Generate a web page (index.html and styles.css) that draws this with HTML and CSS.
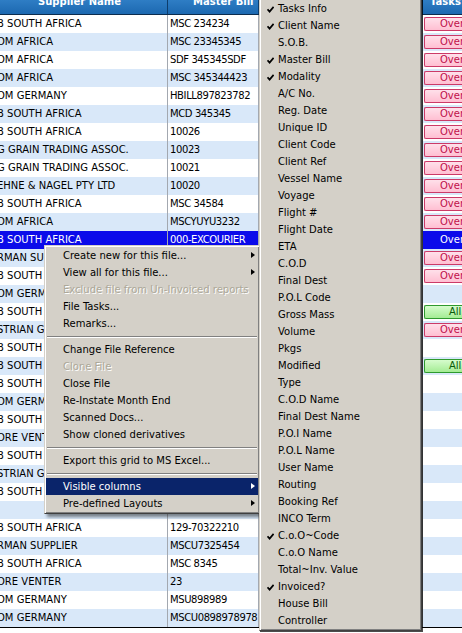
FILE: index.html
```html
<!DOCTYPE html>
<html>
<head>
<meta charset="utf-8">
<link rel="stylesheet" href="styles.css">
</head>
<body>
<div class="screen">
  <div class="grid">
    <div class="hdr">
      <div class="hc h-sup">Supplier Name</div>
      <div class="hc h-mb">Master Bill</div>
      <div class="hc h-x">Modality</div>
      <div class="hc h-t">Tasks Info</div>
    </div>
    <div class="row"><div class="c sup">B SOUTH AFRICA</div><div class="c mb">MSC 234234</div><div class="c x">Sea</div><div class="c t"><span class="bd over">Overdue</span></div></div>
    <div class="row alt"><div class="c sup">OM AFRICA</div><div class="c mb">MSC 23345345</div><div class="c x">Sea</div><div class="c t"><span class="bd over">Overdue</span></div></div>
    <div class="row"><div class="c sup">OM AFRICA</div><div class="c mb">SDF 345345SDF</div><div class="c x">Sea</div><div class="c t"><span class="bd over">Overdue</span></div></div>
    <div class="row alt"><div class="c sup">OM AFRICA</div><div class="c mb">MSC 345344423</div><div class="c x">Sea</div><div class="c t"><span class="bd over">Overdue</span></div></div>
    <div class="row"><div class="c sup">OM GERMANY</div><div class="c mb">HBILL897823782</div><div class="c x">Air</div><div class="c t"><span class="bd over">Overdue</span></div></div>
    <div class="row alt"><div class="c sup">B SOUTH AFRICA</div><div class="c mb">MCD 345345</div><div class="c x">Sea</div><div class="c t"><span class="bd over">Overdue</span></div></div>
    <div class="row"><div class="c sup">B SOUTH AFRICA</div><div class="c mb">10026</div><div class="c x">Sea</div><div class="c t"><span class="bd over">Overdue</span></div></div>
    <div class="row alt"><div class="c sup">G GRAIN TRADING ASSOC.</div><div class="c mb">10023</div><div class="c x">Sea</div><div class="c t"><span class="bd over">Overdue</span></div></div>
    <div class="row"><div class="c sup">G GRAIN TRADING ASSOC.</div><div class="c mb">10021</div><div class="c x">Sea</div><div class="c t"><span class="bd over">Overdue</span></div></div>
    <div class="row alt"><div class="c sup">EHNE &amp; NAGEL PTY LTD</div><div class="c mb">10020</div><div class="c x">Sea</div><div class="c t"><span class="bd over">Overdue</span></div></div>
    <div class="row"><div class="c sup">B SOUTH AFRICA</div><div class="c mb">MSC 34584</div><div class="c x">Sea</div><div class="c t"><span class="bd over">Overdue</span></div></div>
    <div class="row alt"><div class="c sup">OM AFRICA</div><div class="c mb">MSCYUYU3232</div><div class="c x">Sea</div><div class="c t"><span class="bd over">Overdue</span></div></div>
    <div class="row sel"><div class="c sup">B SOUTH AFRICA</div><div class="c mb">000-EXCOURIER</div><div class="c x">Courier</div><div class="c t"><span class="bd selb">Overdue</span></div></div>
    <div class="row alt"><div class="c sup">RMAN SUPPLIER</div><div class="c mb">MSCU7325454</div><div class="c x">Sea</div><div class="c t"><span class="bd over">Overdue</span></div></div>
    <div class="row"><div class="c sup">B SOUTH AFRICA</div><div class="c mb">MSC 8345</div><div class="c x">Sea</div><div class="c t"><span class="bd over">Overdue</span></div></div>
    <div class="row alt"><div class="c sup">OM GERMANY</div><div class="c mb">MSU898989</div><div class="c x">Sea</div><div class="c t"></div></div>
    <div class="row"><div class="c sup">B SOUTH AFRICA</div><div class="c mb">10019</div><div class="c x">Sea</div><div class="c t"><span class="bd all">All done</span></div></div>
    <div class="row alt"><div class="c sup">STRIAN GRAIN</div><div class="c mb">10018</div><div class="c x">Sea</div><div class="c t"><span class="bd over">Overdue</span></div></div>
    <div class="row"><div class="c sup">B SOUTH AFRICA</div><div class="c mb">10017</div><div class="c x">Sea</div><div class="c t"></div></div>
    <div class="row alt"><div class="c sup">B SOUTH AFRICA</div><div class="c mb">10016</div><div class="c x">Sea</div><div class="c t"><span class="bd all">All done</span></div></div>
    <div class="row"><div class="c sup">B SOUTH AFRICA</div><div class="c mb">10015</div><div class="c x">Sea</div><div class="c t"></div></div>
    <div class="row alt"><div class="c sup">OM GERMANY</div><div class="c mb">10014</div><div class="c x">Sea</div><div class="c t"></div></div>
    <div class="row"><div class="c sup">B SOUTH AFRICA</div><div class="c mb">10013</div><div class="c x">Sea</div><div class="c t"></div></div>
    <div class="row alt"><div class="c sup">ORE VENTER</div><div class="c mb">10012</div><div class="c x">Sea</div><div class="c t"></div></div>
    <div class="row"><div class="c sup">B SOUTH AFRICA</div><div class="c mb">10011</div><div class="c x">Sea</div><div class="c t"></div></div>
    <div class="row alt"><div class="c sup">STRIAN GRAIN</div><div class="c mb">10010</div><div class="c x">Sea</div><div class="c t"></div></div>
    <div class="row"><div class="c sup">B SOUTH AFRICA</div><div class="c mb">10009</div><div class="c x">Sea</div><div class="c t"></div></div>
    <div class="row alt"><div class="c sup"></div><div class="c mb">10008</div><div class="c x">Sea</div><div class="c t"></div></div>
    <div class="row"><div class="c sup">B SOUTH AFRICA</div><div class="c mb">129-70322210</div><div class="c x">Air</div><div class="c t"></div></div>
    <div class="row alt"><div class="c sup">RMAN SUPPLIER</div><div class="c mb">MSCU7325454</div><div class="c x">Sea</div><div class="c t"></div></div>
    <div class="row"><div class="c sup">B SOUTH AFRICA</div><div class="c mb">MSC 8345</div><div class="c x">Sea</div><div class="c t"></div></div>
    <div class="row alt"><div class="c sup">ORE VENTER</div><div class="c mb">23</div><div class="c x">Sea</div><div class="c t"></div></div>
    <div class="row"><div class="c sup">OM GERMANY</div><div class="c mb">MSU898989</div><div class="c x">Sea</div><div class="c t"></div></div>
    <div class="row alt"><div class="c sup">OM GERMANY</div><div class="c mb">MSCU0898978978</div><div class="c x">Sea</div><div class="c t"></div></div>
  </div>

  <div class="menu ctx">
    <div class="mi">Create new for this file...<span class="arr"></span></div>
    <div class="mi">View all for this file...<span class="arr"></span></div>
    <div class="mi dis">Exclude file from Un-Invoiced reports</div>
    <div class="mi">File Tasks...</div>
    <div class="mi">Remarks...</div>
    <div class="sep"></div>
    <div class="mi">Change File Reference</div>
    <div class="mi dis">Clone File</div>
    <div class="mi">Close File</div>
    <div class="mi">Re-Instate Month End</div>
    <div class="mi">Scanned Docs...</div>
    <div class="mi">Show cloned derivatives</div>
    <div class="sep"></div>
    <div class="mi">Export this grid to MS Excel...</div>
    <div class="sep"></div>
    <div class="mi hi">Visible columns<span class="arr"></span></div>
    <div class="mi">Pre-defined Layouts<span class="arr"></span></div>
  </div>

  <div class="menu sub">
    <div class="mi on"><svg class="chk" viewBox="0 0 7 7" width="7" height="7"><path d="M0.5 3.2 L2.6 5.6 L6.6 0.8" /></svg>Tasks Info</div>
    <div class="mi on"><svg class="chk" viewBox="0 0 7 7" width="7" height="7"><path d="M0.5 3.2 L2.6 5.6 L6.6 0.8" /></svg>Client Name</div>
    <div class="mi">S.O.B.</div>
    <div class="mi on"><svg class="chk" viewBox="0 0 7 7" width="7" height="7"><path d="M0.5 3.2 L2.6 5.6 L6.6 0.8" /></svg>Master Bill</div>
    <div class="mi on"><svg class="chk" viewBox="0 0 7 7" width="7" height="7"><path d="M0.5 3.2 L2.6 5.6 L6.6 0.8" /></svg>Modality</div>
    <div class="mi">A/C No.</div>
    <div class="mi">Reg. Date</div>
    <div class="mi">Unique ID</div>
    <div class="mi">Client Code</div>
    <div class="mi">Client Ref</div>
    <div class="mi">Vessel Name</div>
    <div class="mi">Voyage</div>
    <div class="mi">Flight #</div>
    <div class="mi">Flight Date</div>
    <div class="mi">ETA</div>
    <div class="mi">C.O.D</div>
    <div class="mi">Final Dest</div>
    <div class="mi">P.O.L Code</div>
    <div class="mi">Gross Mass</div>
    <div class="mi">Volume</div>
    <div class="mi">Pkgs</div>
    <div class="mi">Modified</div>
    <div class="mi">Type</div>
    <div class="mi">C.O.D Name</div>
    <div class="mi">Final Dest Name</div>
    <div class="mi">P.O.I Name</div>
    <div class="mi">P.O.L Name</div>
    <div class="mi">User Name</div>
    <div class="mi">Routing</div>
    <div class="mi">Booking Ref</div>
    <div class="mi">INCO Term</div>
    <div class="mi on"><svg class="chk" viewBox="0 0 7 7" width="7" height="7"><path d="M0.5 3.2 L2.6 5.6 L6.6 0.8" /></svg>C.o.O~Code</div>
    <div class="mi">C.o.O Name</div>
    <div class="mi">Total~Inv. Value</div>
    <div class="mi on"><svg class="chk" viewBox="0 0 7 7" width="7" height="7"><path d="M0.5 3.2 L2.6 5.6 L6.6 0.8" /></svg>Invoiced?</div>
    <div class="mi">House Bill</div>
    <div class="mi">Controller</div>
  </div>
</div>
</body>
</html>
```

FILE: styles.css
```css
html, body {
  margin: 0;
  padding: 0;
  background: #ffffff;
}
.screen {
  position: relative;
  width: 462px;
  height: 633px;
  overflow: hidden;
  font-family: "DejaVu Sans", "Liberation Sans", sans-serif;
  font-size: 10px;
  color: #000;
}
.grid {
  margin-top: -5px;
  border-bottom: 1px solid #000;
}
.hdr {
  display: grid;
  grid-template-columns: 168px 91px 164px 1fr;
  height: 19px;
  border-bottom: 1px solid #0b2c4e;
  background: linear-gradient(#3585cc, #1c68b0);
}
.hc {
  color: #fff;
  font-weight: bold;
  line-height: 14px;
  white-space: nowrap;
  overflow: hidden;
  border-right: 1px solid #0d3d6c;
}
.h-sup { padding-left: 38px; }
.h-mb { padding-left: 25px; }
.h-x { padding-left: 50px; }
.h-t { padding-left: 7px; border-right: none; }
.row {
  display: grid;
  grid-template-columns: 168px 91px 164px 1fr;
  height: 18px;
  background: #ffffff;
}
.row.alt { background: #d9e8f9; }
.row.sel { background: #0b0bea; color: #fff; }
.c {
  line-height: 18px;
  white-space: nowrap;
  overflow: hidden;
  border-right: 1px solid #a3a8b0;
  padding-left: 2px;
}
.c.sup { text-indent: -3px; padding-left: 0; }
.c.mb { letter-spacing: -0.4px; }
.c.t { border-right: none; padding-left: 0; }
.bd {
  display: block;
  box-sizing: border-box;
  height: 14px;
  margin: 2px 0 0 1px;
  line-height: 12px;
  border: 1px solid transparent;
  border-right: none;
  border-radius: 2px 0 0 2px;
}
.bd.over {
  background: linear-gradient(#ffe0ea, #ffbfd2);
  border-color: #cc3a68;
  color: #c0104a;
  padding-left: 15px;
}
.bd.selb {
  color: #fff;
  padding-left: 15px;
}
.bd.all {
  background: linear-gradient(#d6fccd, #a4ec94);
  border-color: #2e9a2e;
  color: #0a5a0a;
  padding-left: 24px;
}
.menu {
  position: absolute;
  background: #d4d0c8;
  border: 1px solid;
  border-color: #d4d0c8 #404040 #404040 #d4d0c8;
  box-shadow: inset 1px 1px 0 #fff, inset -1px -1px 0 #808080, 3px 3px 3px rgba(0, 0, 0, 0.45);
  padding: 1px;
}
.ctx {
  left: 44px;
  top: 245px;
  width: 212px;
}
.sub {
  left: 259px;
  top: -2px;
  width: 159px;
  box-shadow: inset 1px 1px 0 #fff, inset -1px -1px 0 #808080, 1px 1px 0 rgba(0, 0, 0, 0.7);
}
.mi {
  position: relative;
  height: 17px;
  line-height: 17px;
  padding-left: 17px;
  white-space: nowrap;
}
.mi.dis {
  color: #aca899;
  text-shadow: 1px 1px 0 #fff;
}
.mi.hi {
  background: #0a246a;
  color: #fff;
}
.arr {
  position: absolute;
  right: 3px;
  top: 5px;
  width: 0;
  height: 0;
  border-left: 4px solid #000;
  border-top: 3.5px solid transparent;
  border-bottom: 3.5px solid transparent;
}
.mi.hi .arr { border-left-color: #fff; }
.chk {
  position: absolute;
  left: 6px;
  top: 6px;
}
.chk path {
  fill: none;
  stroke: #000;
  stroke-width: 1.7;
}
.sep {
  height: 9px;
  position: relative;
}
.sep::before {
  content: "";
  position: absolute;
  left: 1px;
  right: 1px;
  top: 4px;
  border-top: 1px solid #808080;
  border-bottom: 1px solid #fff;
}
```
